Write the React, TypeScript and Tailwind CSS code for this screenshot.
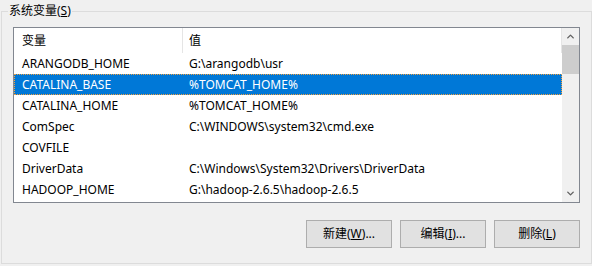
import { ChevronUp, ChevronDown } from 'lucide-react'

const rows = [
  { name: 'ARANGODB_HOME', value: 'G:\\arangodb\\usr' },
  { name: 'CATALINA_BASE', value: '%TOMCAT_HOME%', selected: true },
  { name: 'CATALINA_HOME', value: '%TOMCAT_HOME%' },
  { name: 'ComSpec', value: 'C:\\WINDOWS\\system32\\cmd.exe' },
  { name: 'COVFILE', value: '' },
  { name: 'DriverData', value: 'C:\\Windows\\System32\\Drivers\\DriverData' },
  { name: 'HADOOP_HOME', value: 'G:\\hadoop-2.6.5\\hadoop-2.6.5' },
]

function Button({ label, hotkey, suffix = '' }: { label: string; hotkey: string; suffix?: string }) {
  return (
    <button className="w-[86px] h-[28px] bg-[#e1e1e1] border border-[#adadad] text-[12px] text-black flex items-center justify-center">
      {label}(<span className="underline">{hotkey}</span>){suffix}
    </button>
  )
}

export default function App() {
  return (
    <div
      className="w-[592px] h-[266px] bg-[#f0f0f0] pt-[11px] pl-px text-black text-[12px] leading-none"
      style={{ fontFamily: '"Noto Sans", "Noto Sans CJK SC", sans-serif' }}
    >
      <div className="relative w-[591px] h-[253px] border border-[#dcdcdc] pt-[15px] pl-[11px]">
        <span className="absolute left-[6px] top-[-8px] bg-[#f0f0f0] px-[1px] leading-[14px]">
          系统变量(<span className="underline">S</span>)
        </span>

        <div className="w-[567px] h-[176px] border border-[#828790] bg-white flex">
          <div className="flex-1 flex flex-col">
            <div className="h-[25px] flex items-center">
              <div className="w-[169px] h-full pl-[8px] flex items-center border-r border-[#e5e5e5]">变量</div>
              <div className="flex-1 h-full pl-[6px] flex items-center border-r border-[#e5e5e5]">值</div>
            </div>
            {rows.map((r) => (
              <div
                key={r.name}
                className={
                  r.selected
                    ? 'h-[21px] flex items-center bg-[#0078d7] text-white border border-dotted border-[#f0a040]'
                    : 'h-[21px] flex items-center border border-transparent'
                }
              >
                <div className="w-[168px] pl-[7px] whitespace-nowrap">{r.name}</div>
                <div className="flex-1 pl-[6px] whitespace-nowrap">{r.value}</div>
              </div>
            ))}
          </div>
          <div className="w-[17px] bg-[#f0f0f0] flex flex-col">
            <div className="h-[17px] flex items-center justify-center text-[#606060]">
              <ChevronUp size={11} strokeWidth={3} />
            </div>
            <div className="h-[29px] bg-[#cdcdcd]" />
            <div className="flex-1" />
            <div className="h-[17px] flex items-center justify-center text-[#606060]">
              <ChevronDown size={11} strokeWidth={3} />
            </div>
          </div>
        </div>

        <div className="mt-[17px] w-[567px] flex justify-end gap-[8px]">
          <Button label="新建" hotkey="W" suffix="..." />
          <Button label="编辑" hotkey="I" suffix="..." />
          <Button label="删除" hotkey="L" />
        </div>
      </div>
    </div>
  )
}
